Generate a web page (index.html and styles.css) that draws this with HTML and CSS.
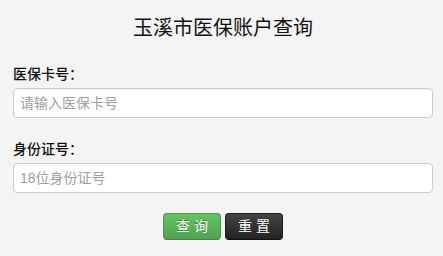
FILE: index.html
```html
<!DOCTYPE html>
<html lang="zh-CN">
<head>
<meta charset="utf-8">
<title>玉溪市医保账户查询</title>
<link rel="stylesheet" href="styles.css">
</head>
<body>
<div class="page">
  <h1 class="title">玉溪市医保账户查询</h1>
  <form class="form">
    <div class="field">
      <label class="label" for="card">医保卡号：</label>
      <input class="input" id="card" type="text" placeholder="请输入医保卡号">
    </div>
    <div class="field">
      <label class="label" for="idno">身份证号：</label>
      <input class="input" id="idno" type="text" placeholder="18位身份证号">
    </div>
    <div class="actions">
      <button class="btn btn-success" type="button">查 询</button>
      <button class="btn btn-inverse" type="reset">重 置</button>
    </div>
  </form>
</div>
</body>
</html>
```
FILE: styles.css
```css
html, body {
  margin: 0;
  padding: 0;
  background: #f4f4f4;
}
body {
  font-family: "Liberation Sans", "Noto Sans CJK SC", sans-serif;
  color: #222;
}
.page {
  width: 420px;
  margin-left: 13px;
}
.title {
  margin: 0;
  padding-top: 16px;
  font-size: 20px;
  line-height: 24px;
  font-weight: normal;
  text-align: center;
  color: #111;
}
.form {
  margin: 0;
  padding-top: 24px;
}
.field {
  display: flex;
  flex-direction: column;
  gap: 4px;
  margin-bottom: 21px;
}
.label {
  font-size: 14px;
  line-height: 20px;
  font-weight: 500;
  color: #111;
}
.input {
  box-sizing: border-box;
  height: 30px;
  width: 100%;
  margin: 0;
  padding: 0 6px;
  border: 1px solid #cccccc;
  border-radius: 4px;
  background: #fff;
  font-family: "Liberation Sans", "Noto Sans CJK SC", sans-serif;
  font-size: 14px;
  color: #555;
  box-shadow: inset 0 1px 1px rgba(0,0,0,0.04);
  outline: none;
}
.input::placeholder {
  color: #a0a0a0;
}
.actions {
  display: flex;
  justify-content: center;
  gap: 4px;
  margin-top: -1px;
}
.btn {
  box-sizing: border-box;
  height: 27px;
  padding: 0 12px;
  border-radius: 4px;
  font-family: "Liberation Sans", "Noto Sans CJK SC", sans-serif;
  font-size: 14px;
  line-height: 25px;
  color: #fff;
  text-shadow: 0 -1px 0 rgba(0,0,0,0.25);
  cursor: pointer;
}
.btn-success {
  background: linear-gradient(to bottom, #62c462, #51a351);
  border: 1px solid #4a9a4a;
  border-bottom-color: #3f873f;
}
.btn-inverse {
  background: linear-gradient(to bottom, #444444, #222222);
  border: 1px solid #1c1c1c;
  border-bottom-color: #111;
}
```
